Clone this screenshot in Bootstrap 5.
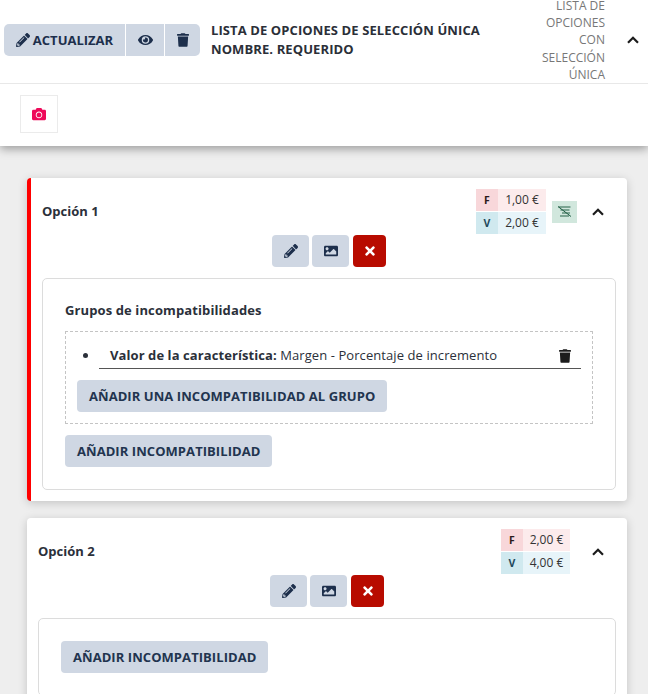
<!DOCTYPE html>
<html lang="es"><head><meta charset="utf-8">
<link href="https://cdn.jsdelivr.net/npm/bootstrap@5.3.0/dist/css/bootstrap.min.css" rel="stylesheet">
<script src="https://cdn.jsdelivr.net/npm/bootstrap@5.3.0/dist/js/bootstrap.bundle.min.js"></script>
<style>
html,body{height:694px;overflow:hidden}
body{background:#eee;font-family:"Open Sans",sans-serif;font-size:13px;color:#2b303a}
.ic{display:block;fill:currentColor}
.top-panel{background:#fff;height:146px;box-shadow:0 3px 9px rgba(0,0,0,.35)}
.top-row{height:84px;border-bottom:1px solid #e8e8e8;padding:0 0 3px 4px}
.act-group{display:flex;gap:1px}
.act{background:#cfd7e3;color:#1d2f4c;border:0;height:32px;font-weight:700;font-size:13px;display:inline-flex;align-items:center;justify-content:center;padding:0;border-radius:0;line-height:1}
.act-a{width:121px;gap:3px;border-radius:5px 0 0 5px}
.act-b{width:38px}
.act-c{width:35px;border-radius:0 5px 5px 0}
.top-title{font-weight:700;font-size:13px;line-height:19px;letter-spacing:.1px;margin-left:11px;color:#2b2f38;flex:1 1 0}
.top-side{width:68px;text-align:right;line-height:17.2px;font-size:12px;color:#777;flex:none}
.top-chev{width:43px;flex:none;display:flex;justify-content:center;padding-left:12px}
.photo{width:38px;height:38px;border:1px solid #ebebeb;margin:11px 0 0 20px;display:flex;align-items:center;justify-content:center;color:#ee0a5a}
.opc{background:#fff;border:0;border-radius:4px;box-shadow:0 2px 10px rgba(0,0,0,.18);margin-right:21px;margin-left:27px;padding:11px 11px 0}
.opc1{margin-top:32px;height:323px;border-left:4px solid #f00}
.opc2{margin-top:17px;height:200px}
.opc-h{display:flex;align-items:center;font-weight:700;height:45px;margin-bottom:1px}
.price{display:grid;grid-template-columns:22px 48px;gap:1px 0;font-size:12px;font-weight:400;text-align:center;line-height:22px;color:#333;margin-left:auto;margin-right:10px}
.price2{grid-template-columns:22px 47px}
.price1{margin-right:6px}
.pf{background:#f8d7da;font-weight:700;font-size:10.5px;color:#2a1a1a}
.pfv{background:#fcebec}
.pv{background:#d0e9ef;font-weight:700;font-size:10.5px;color:#1f4a5c}
.pvv{background:#e7f4f9}
.tag{width:25px;height:22px;background:#d1e7dd;display:flex;align-items:center;justify-content:center;margin-right:3px}
.chev{width:36px;display:flex;justify-content:center;flex:none}
.tools{display:flex;justify-content:center;gap:3px;margin-bottom:11px;height:32px}
.sq{width:37px;height:32px;background:#cfd7e3;color:#1d2f4c;border:0;border-radius:4px;display:flex;align-items:center;justify-content:center;padding:0}
.sq-r{background:#b80b00;color:#fff;width:33px;margin-left:1px}
.inner{border:1px solid #dcdcdc;border-radius:5px;padding:22px}
.grp-title{font-weight:700;font-size:13px;line-height:18px;margin-bottom:12px;letter-spacing:.11px}
.dash{border:1px dashed #c4c4c4;padding:11px;margin-bottom:11px}
.dash ul{padding-left:22px;margin:0 0 11px}
.li-in{display:flex;justify-content:space-between;align-items:center;height:26px;padding:0 10px 0 11px;border-bottom:1px solid #555;letter-spacing:.08px}
.li-in b{font-weight:700}
.li-in svg{color:#1c1c1c}
.add{background:#cfd7e3;color:#22344f;border:0;border-radius:4px;height:32px;padding:0 12px;font-weight:700;font-size:13px;letter-spacing:.06px;line-height:1;display:block}
</style></head><body>
<svg width="0" height="0" class="position-absolute">
<symbol id="i-pencil" viewBox="0 0 512 512"><path d="M497.900 142.100l-46.100 46.100c-4.700 4.700-12.300 4.700-17 0l-111-111c-4.700-4.700-4.700-12.300 0-17l46.100-46.100c18.700-18.700 49.100-18.700 67.900 0l60.100 60.100c18.800 18.700 18.800 49.100 0 67.900zM284.200 99.800L21.600 362.400.4 483.900c-2.900 16.400 11.400 30.600 27.800 27.800l121.500-21.300 262.600-262.600c4.700-4.700 4.700-12.300 0-17l-111-111c-4.800-4.700-12.400-4.700-17.100 0zM124.100 339.900c-5.500-5.500-5.500-14.300 0-19.800l154-154c5.500-5.500 14.300-5.500 19.800 0s5.500 14.300 0 19.800l-154 154c-5.500 5.500-14.300 5.500-19.800 0zM88 424h48v36.300l-64.500 11.300-31.100-31.100L51.700 376H88v48z"/></symbol>
<symbol id="i-eye" viewBox="0 0 576 512"><path d="M572.520 241.400C518.290 135.590 410.930 64 288 64S57.680 135.640 3.480 241.410a32.350 32.350 0 0 0 0 29.190C57.710 376.410 165.070 448 288 448s230.320-71.640 284.520-177.410a32.350 32.350 0 0 0 0-29.190zM288 400a144 144 0 1 1 144-144 143.930 143.930 0 0 1-144 144zm0-240a95.310 95.310 0 0 0-25.310 3.790 47.850 47.850 0 0 1-66.900 66.900A95.780 95.780 0 1 0 288 160z"/></symbol>
<symbol id="i-trash" viewBox="0 0 448 512"><path d="M432 32H312l-9.400-18.700A24 24 0 0 0 281.100 0H166.800a23.720 23.720 0 0 0-21.400 13.300L136 32H16A16 16 0 0 0 0 48v32a16 16 0 0 0 16 16h416a16 16 0 0 0 16-16V48a16 16 0 0 0-16-16zM53.200 467a48 48 0 0 0 47.900 45h245.800a48 48 0 0 0 47.900-45L416 128H32z"/></symbol>
<symbol id="i-times" viewBox="0 0 352 512"><path d="M242.720 256l100.070-100.070c12.280-12.280 12.280-32.190 0-44.480l-22.240-22.240c-12.280-12.280-32.190-12.280-44.480 0L176 189.280 75.930 89.210c-12.280-12.280-32.190-12.280-44.480 0L9.210 111.450c-12.280 12.280-12.280 32.190 0 44.480L109.280 256 9.210 356.070c-12.280 12.280-12.280 32.190 0 44.480l22.240 22.240c12.280 12.280 32.200 12.280 44.480 0L176 322.720l100.070 100.070c12.280 12.280 32.200 12.280 44.480 0l22.240-22.240c12.280-12.280 12.280-32.190 0-44.480L242.720 256z"/></symbol>
<symbol id="i-image" viewBox="0 0 512 512"><path d="M464 448H48c-26.510 0-48-21.490-48-48V112c0-26.510 21.490-48 48-48h416c26.510 0 48 21.490 48 48v288c0 26.510-21.490 48-48 48zM112 120c-30.928 0-56 25.072-56 56s25.072 56 56 56 56-25.072 56-56-25.072-56-56-56zM64 384h384V272l-87.515-87.515c-4.686-4.686-12.284-4.686-16.971 0L208 320l-55.515-55.515c-4.686-4.686-12.284-4.686-16.971 0L64 336v48z"/></symbol>
<symbol id="i-camera" viewBox="0 0 512 512"><path d="M512 144v288c0 26.500-21.500 48-48 48H48c-26.500 0-48-21.500-48-48V144c0-26.500 21.500-48 48-48h88l12.300-32.900c7-18.700 24.900-31.100 44.900-31.100h125.500c20 0 37.900 12.400 44.900 31.100L376 96h88c26.500 0 48 21.500 48 48zM376 288c0-66.200-53.800-120-120-120s-120 53.800-120 120 53.800 120 120 120 120-53.800 120-120zm-32 0c0 48.500-39.500 88-88 88s-88-39.500-88-88 39.500-88 88-88 88 39.500 88 88z"/></symbol>
<symbol id="i-chev" viewBox="0 0 12 8"><path d="M1 6.800l5-5 5 5" fill="none" stroke="#1c1c1c" stroke-width="2.200"/></symbol>
</svg>

<div class="top-panel">
 <div class="top-row d-flex align-items-center">
  <div class="act-group">
   <button class="btn act act-a"><svg class="ic" width="14" height="14"><use href="#i-pencil"/></svg>ACTUALIZAR</button>
   <button class="btn act act-b"><svg class="ic" width="15" height="14"><use href="#i-eye"/></svg></button>
   <button class="btn act act-c"><svg class="ic" width="12" height="14"><use href="#i-trash"/></svg></button>
  </div>
  <div class="top-title">LISTA DE OPCIONES DE SELECCIÓN ÚNICA NOMBRE. REQUERIDO</div>
  <div class="top-side">LISTA DE OPCIONES CON SELECCIÓN ÚNICA</div>
  <div class="top-chev"><svg width="12" height="8"><use href="#i-chev"/></svg></div>
 </div>
 <div class="photo"><svg class="ic" width="14" height="14"><use href="#i-camera"/></svg></div>
</div>

<div class="card opc opc1">
 <div class="opc-h">
  <span>Opción 1</span>
  <div class="price price1"><span class="pf">F</span><span class="pfv">1,00 €</span><span class="pv">V</span><span class="pvv">2,00 €</span></div>
  <div class="tag"><svg width="15" height="11" viewBox="0 0 15 11"><path d="M1.500 1h12M3.500 4h9M5 7h8M3 10h9" fill="none" stroke="#5f8f7a" stroke-width="1.500"/><path d="M1 .5l13 10" stroke="#1f5c43" stroke-width="1"/></svg></div>
  <div class="chev"><svg width="12" height="8"><use href="#i-chev"/></svg></div>
 </div>
 <div class="tools">
  <button class="btn sq"><svg class="ic" width="14" height="14"><use href="#i-pencil"/></svg></button>
  <button class="btn sq"><svg class="ic" width="14" height="14"><use href="#i-image"/></svg></button>
  <button class="btn sq sq-r"><svg class="ic" width="10" height="14"><use href="#i-times"/></svg></button>
 </div>
 <div class="inner">
  <div class="grp-title">Grupos de incompatibilidades</div>
  <div class="dash">
   <ul><li><div class="li-in"><span><b>Valor de la característica:</b> Margen - Porcentaje de incremento</span><svg class="ic" width="12" height="14"><use href="#i-trash"/></svg></div></li></ul>
   <button class="btn add">AÑADIR UNA INCOMPATIBILIDAD AL GRUPO</button>
  </div>
  <button class="btn add">AÑADIR INCOMPATIBILIDAD</button>
 </div>
</div>

<div class="card opc opc2">
 <div class="opc-h">
  <span>Opción 2</span>
  <div class="price price2"><span class="pf">F</span><span class="pfv">2,00 €</span><span class="pv">V</span><span class="pvv">4,00 €</span></div>
  <div class="chev"><svg width="12" height="8"><use href="#i-chev"/></svg></div>
 </div>
 <div class="tools">
  <button class="btn sq"><svg class="ic" width="14" height="14"><use href="#i-pencil"/></svg></button>
  <button class="btn sq"><svg class="ic" width="14" height="14"><use href="#i-image"/></svg></button>
  <button class="btn sq sq-r"><svg class="ic" width="10" height="14"><use href="#i-times"/></svg></button>
 </div>
 <div class="inner">
  <button class="btn add">AÑADIR INCOMPATIBILIDAD</button>
 </div>
</div>
</body></html>
